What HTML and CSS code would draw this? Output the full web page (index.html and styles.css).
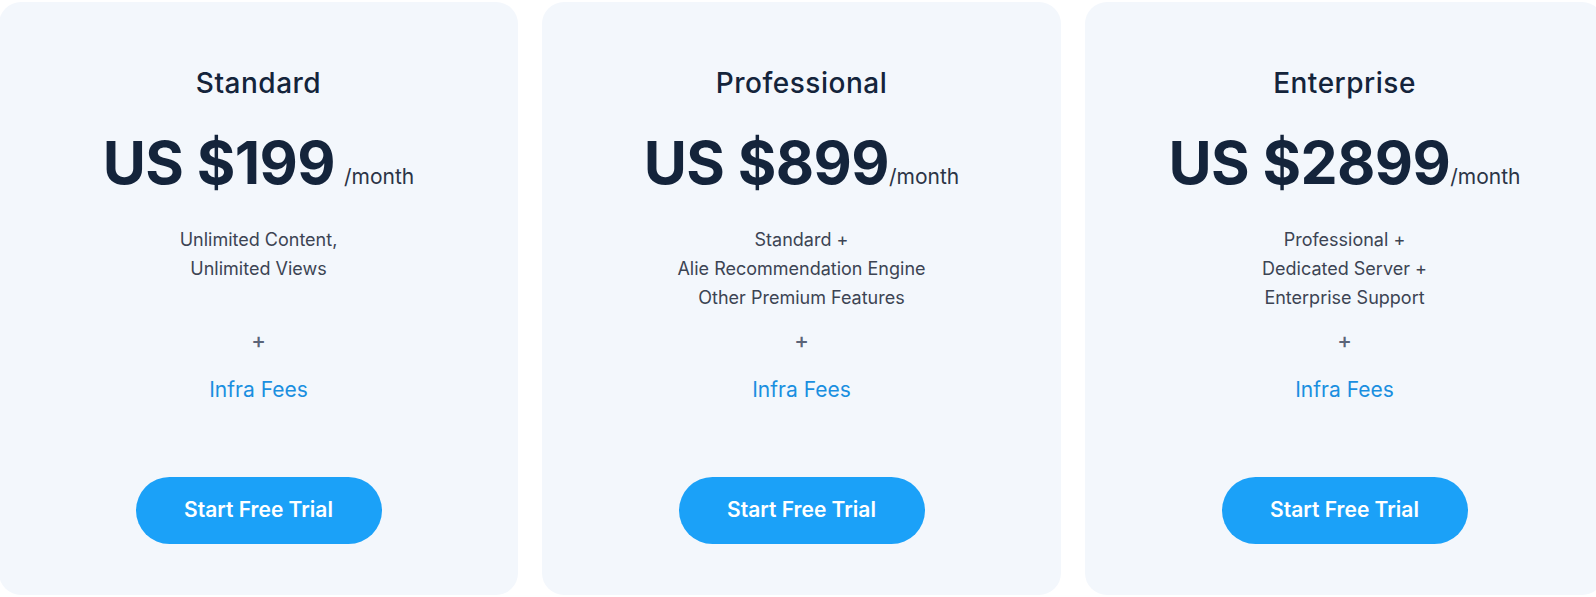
FILE: index.html
```html
<!DOCTYPE html>
<html lang="en">
<head>
<meta charset="utf-8">
<title>Pricing</title>
<link rel="stylesheet" href="styles.css">
</head>
<body>
<div class="viewport">
  <div class="track">
    <div class="card">
      <h3 class="plan">Standard</h3>
      <div class="price"><span class="amount">US $199</span><span class="per per-spaced">/month</span></div>
      <div class="desc">Unlimited Content,<br>Unlimited Views</div>
      <div class="plus">+</div>
      <div class="fees">Infra Fees</div>
      <button class="cta">Start Free Trial</button>
    </div>
    <div class="card">
      <h3 class="plan">Professional</h3>
      <div class="price"><span class="amount">US $899</span><span class="per">/month</span></div>
      <div class="desc">Standard +<br>Alie Recommendation Engine<br>Other Premium Features</div>
      <div class="plus">+</div>
      <div class="fees">Infra Fees</div>
      <button class="cta">Start Free Trial</button>
    </div>
    <div class="card">
      <h3 class="plan">Enterprise</h3>
      <div class="price"><span class="amount">US $2899</span><span class="per">/month</span></div>
      <div class="desc">Professional +<br>Dedicated Server +<br>Enterprise Support</div>
      <div class="plus">+</div>
      <div class="fees">Infra Fees</div>
      <button class="cta">Start Free Trial</button>
    </div>
  </div>
</div>
</body>
</html>
```

FILE: styles.css
```css
* { box-sizing: border-box; }
html, body {
  margin: 0;
  padding: 0;
  background: #ffffff;
  overflow: hidden;
}
body {
  font-family: Inter, "Noto Sans", sans-serif;
  color: #14243b;
}
.viewport {
  width: 100%;
  overflow: hidden;
  padding-top: 2px;
}
.track {
  display: flex;
  gap: 24px;
  margin-left: -1px;
}
.card {
  flex: 0 0 519px;
  height: 593px;
  background: #f3f7fc;
  border-radius: 22px;
  display: flex;
  flex-direction: column;
  align-items: center;
  padding-top: 64px;
  text-align: center;
}
.plan {
  margin: 0;
  font-size: 28px;
  line-height: 34px;
  font-weight: 450;
  color: #14243b;
  letter-spacing: 0.5px;
}
.price {
  margin-top: 33px;
  font-size: 59px;
  line-height: 60px;
  height: 60px;
  white-space: nowrap;
}
.amount {
  font-weight: 650;
  letter-spacing: -0.6px;
  color: #14243b;
}
.per {
  font-size: 21px;
  line-height: 1;
  font-weight: 400;
  color: #2b3446;
}
.per-spaced {
  margin-left: 9px;
}
.desc {
  margin-top: 32px;
  height: 87px;
  font-size: 18px;
  line-height: 29px;
  color: #3c4453;
}
.plus {
  margin-top: 16px;
  font-size: 22px;
  line-height: 24px;
  font-weight: 500;
  color: #5b6478;
}
.fees {
  margin-top: 26px;
  font-size: 21px;
  line-height: 24px;
  color: #1a8fe0;
}
.cta {
  margin-top: 75px;
  width: 246px;
  height: 67px;
  border: none;
  border-radius: 34px;
  background: #1ba1f8;
  color: #ffffff;
  font-family: Inter, "Noto Sans", sans-serif;
  font-size: 21px;
  font-weight: 600;
  padding: 0 0 2px;
  cursor: pointer;
}
```
